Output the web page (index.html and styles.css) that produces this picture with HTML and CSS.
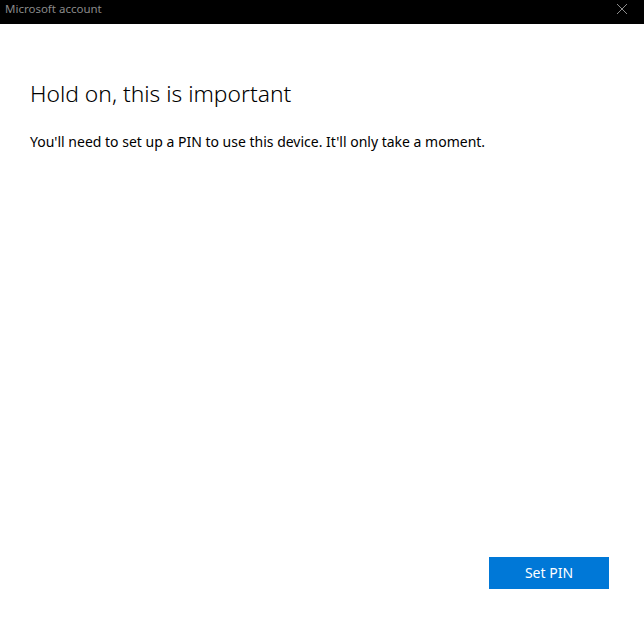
FILE: index.html
```html
<!DOCTYPE html>
<html>
<head>
<meta charset="utf-8">
<link rel="stylesheet" href="styles.css">
</head>
<body>
<div class="window">
  <div class="titlebar">
    <span class="title">Microsoft account</span>
    <span class="close" aria-label="Close">
      <svg width="12" height="12" viewBox="0 0 12 12"><path d="M1 1 L11 11 M11 1 L1 11" stroke="#8c8c8c" stroke-width="1" fill="none"/></svg>
    </span>
  </div>
  <div class="content">
    <h1 class="heading">Hold on, this is important</h1>
    <p class="text">You'll need to set up a PIN to use this device. It'll only take a moment.</p>
    <div class="spacer"></div>
    <div class="actions">
      <button class="btn">Set PIN</button>
    </div>
  </div>
</div>
</body>
</html>
```
FILE: styles.css
```css
html, body {
  margin: 0;
  padding: 0;
  height: 100%;
  background: #fff;
}
.window {
  display: flex;
  flex-direction: column;
  height: 100vh;
  font-family: "Noto Sans", "Open Sans", sans-serif;
}
.titlebar {
  height: 24px;
  background: #000;
  display: flex;
  align-items: center;
  justify-content: space-between;
  padding: 0 0 0 5px;
}
.title {
  color: #8a8a8a;
  font-size: 11.5px;
  line-height: 16px;
  margin-top: -6px;
}
.close {
  width: 44px;
  height: 24px;
  display: flex;
  align-items: center;
  justify-content: center;
  margin-top: -6px;
}
.content {
  flex: 1;
  display: flex;
  flex-direction: column;
  padding: 0 35px 32px 30px;
}
.heading {
  margin: 54px 0 0 0;
  font-weight: 300;
  font-size: 22.8px;
  line-height: 32px;
  color: #000;
}
.text {
  margin: 22px 0 0 0;
  font-size: 14px;
  line-height: 20px;
  color: #000;
}
.spacer {
  flex: 1;
}
.actions {
  display: flex;
  justify-content: flex-end;
}
.btn {
  width: 120px;
  height: 32px;
  border: none;
  background: #0078d7;
  color: #fff;
  font-family: inherit;
  font-size: 14px;
  padding: 0 0 2px 0;
}
```
